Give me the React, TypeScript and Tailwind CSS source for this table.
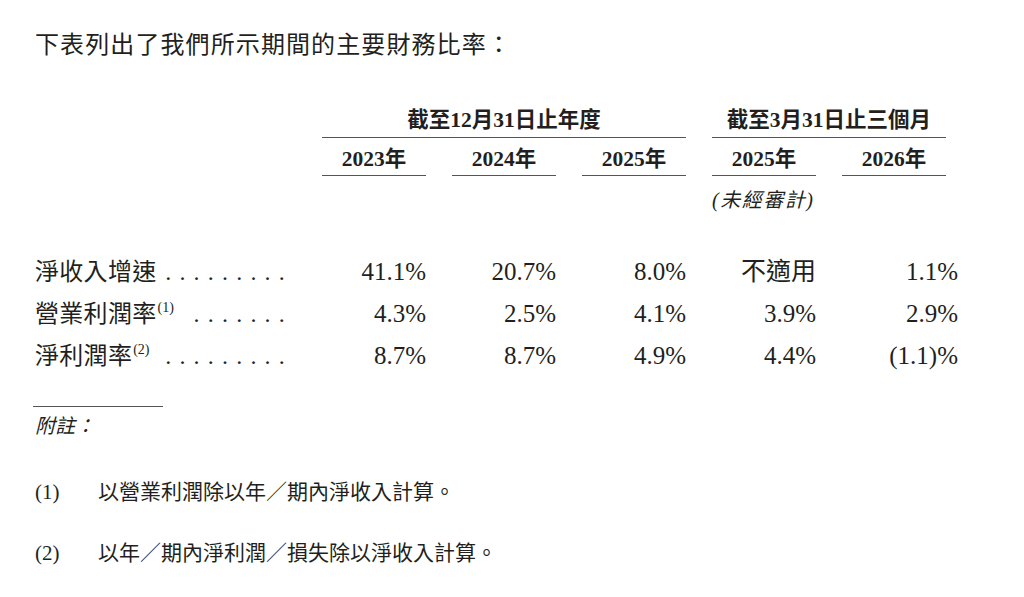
import React from "react";

const serif = "font-['Liberation_Serif','Noto_Sans_CJK_TC',serif]";

const years = ["2023年", "2024年", "2025年", "2025年", "2026年"];

const rows: { label: string; note?: string; dots: string; values: string[] }[] = [
  { label: "淨收入增速", dots: ".........", values: ["41.1%", "20.7%", "8.0%", "不適用", "1.1%"] },
  { label: "營業利潤率", note: "(1)", dots: ".......", values: ["4.3%", "2.5%", "4.1%", "3.9%", "2.9%"] },
  { label: "淨利潤率", note: "(2)", dots: ".........", values: ["8.7%", "8.7%", "4.9%", "4.4%", "(1.1)%"] },
];

const grid = "grid grid-cols-[261px_104px_104px_104px_104px_104px] gap-x-[26px]";

export default function App() {
  return (
    <div className={`w-[1024px] h-[597px] bg-white text-[#231f20] pl-[35px] overflow-hidden ${serif}`}>
      {/* Intro */}
      <p className="pt-[31px] h-[108px] text-[24px] leading-[28px] tracking-[1.1px]">
        下表列出了我們所示期間的主要財務比率：
      </p>

      {/* Group headers */}
      <div className={grid}>
        <div />
        <div className="col-span-3 border-b-[1.5px] border-[#555] text-center font-bold text-[21.5px] leading-[24px] pb-[5px]">
          截至12月31日止年度
        </div>
        <div className="col-span-2 border-b-[1.5px] border-[#555] text-center font-bold text-[21.5px] leading-[24px] pb-[5px]">
          截至3月31日止三個月
        </div>
      </div>

      {/* Year headers */}
      <div className={`${grid} mt-[9px]`}>
        <div />
        {years.map((y, i) => (
          <div
            key={i}
            className="border-b-[1.5px] border-[#555] text-center font-bold text-[21.5px] leading-[24px] pb-[4px]"
          >
            {y}
          </div>
        ))}
      </div>

      <div className={`${grid} mt-[12px]`}>
        <div className="col-start-5 italic text-[20px] leading-[24px] tracking-[1.5px] whitespace-nowrap">(未經審計)</div>
      </div>

      {/* Ratio rows */}
      <div className="mt-[39px] flex flex-col">
        {rows.map((r) => (
          <div key={r.label} className={`${grid} h-[42px] items-center`}>
            <div className="flex items-center text-[24px] leading-[28px] whitespace-nowrap">
              <span className="tracking-[0.3px]">{r.label}</span>
              {r.note && (
                <span className="relative -top-[6px] text-[14px] leading-[14px] ml-[1px]">{r.note}</span>
              )}
              <span className="ml-auto mr-[3px] tracking-[8.2px]">{r.dots}</span>
            </div>
            {r.values.map((v, i) => (
              <div
                key={i}
                className={`text-right text-[25px] leading-[28px] ${i === 4 ? "-mr-[12px]" : ""}`}
              >
                {v}
              </div>
            ))}
          </div>
        ))}
      </div>

      {/* Notes */}
      <div className="mt-[29px] w-[130px] -ml-[2px] border-t-[1.5px] border-[#555]" />
      <p className="mt-[6px] italic text-[20px] leading-[26px]">附註：</p>

      <div className="mt-[40px] flex items-center text-[21px] leading-[26px]">
        <span className="w-[63px]">(1)</span>
        <span>以營業利潤除以年／期內淨收入計算。</span>
      </div>
      <div className="mt-[35px] flex items-center text-[21px] leading-[26px]">
        <span className="w-[63px]">(2)</span>
        <span>以年／期內淨利潤／損失除以淨收入計算。</span>
      </div>
    </div>
  );
}
